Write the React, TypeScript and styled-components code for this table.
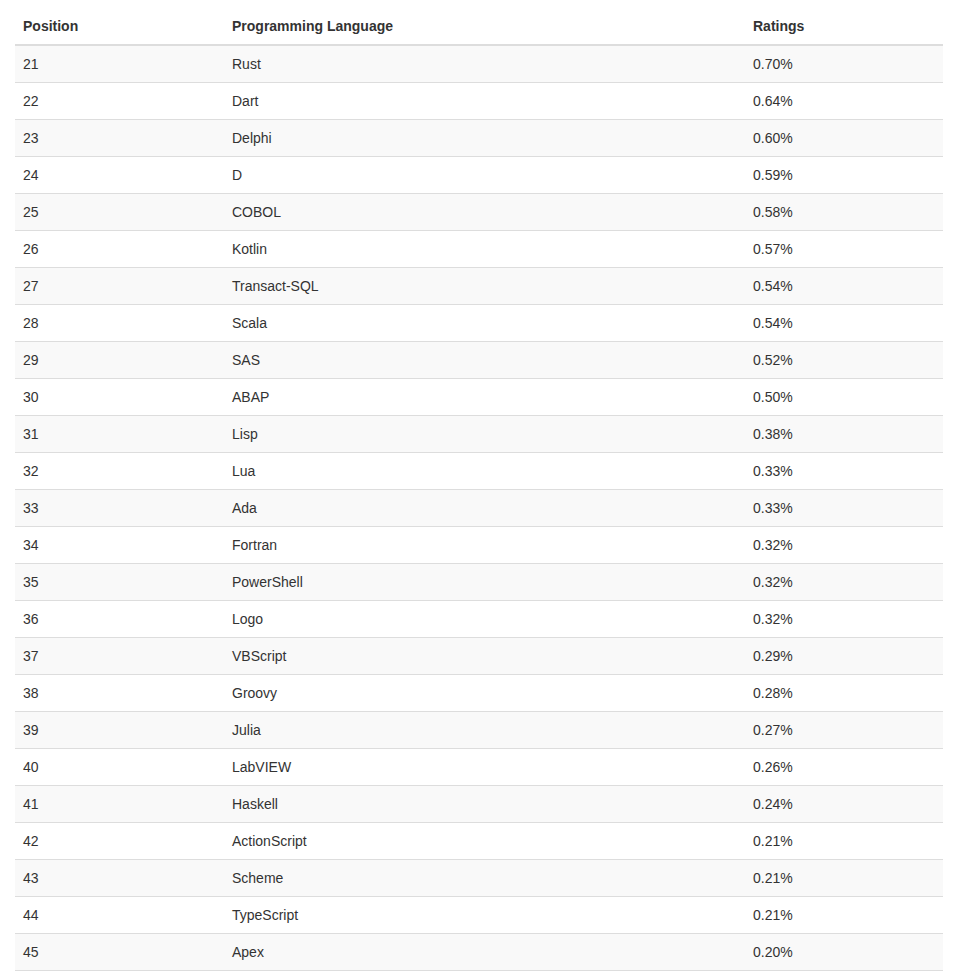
import React from "react";
import styled, { createGlobalStyle } from "styled-components";

const Global = createGlobalStyle`
  html, body { margin: 0; padding: 0; background: #fff; }
  body {
    font-family: "Liberation Sans", Arial, sans-serif;
    font-size: 14px;
    line-height: 1.42857143;
    color: #333;
  }
`;

const Page = styled.div`
  padding: 8px 13px 0 15px;
`;

const Table = styled.table`
  width: 928px;
  table-layout: fixed;
  border-collapse: collapse;
  border-spacing: 0;
`;

const HeadCell = styled.th<{ $w: number }>`
  box-sizing: border-box;
  width: ${(p) => p.$w}px;
  text-align: left;
  font-weight: bold;
  padding: 8px;
  line-height: 20px;
  vertical-align: bottom;
  border-bottom: 2px solid #ddd;
`;

const Row = styled.tr<{ $odd: boolean }>`
  background: ${(p) => (p.$odd ? "#f9f9f9" : "#fff")};
`;

const Cell = styled.td`
  padding: 8px;
  line-height: 20px;
  vertical-align: top;
  border-bottom: 1px solid #ddd;
`;

const data: [number, string, string][] = [
  [21, "Rust", "0.70%"],
  [22, "Dart", "0.64%"],
  [23, "Delphi", "0.60%"],
  [24, "D", "0.59%"],
  [25, "COBOL", "0.58%"],
  [26, "Kotlin", "0.57%"],
  [27, "Transact-SQL", "0.54%"],
  [28, "Scala", "0.54%"],
  [29, "SAS", "0.52%"],
  [30, "ABAP", "0.50%"],
  [31, "Lisp", "0.38%"],
  [32, "Lua", "0.33%"],
  [33, "Ada", "0.33%"],
  [34, "Fortran", "0.32%"],
  [35, "PowerShell", "0.32%"],
  [36, "Logo", "0.32%"],
  [37, "VBScript", "0.29%"],
  [38, "Groovy", "0.28%"],
  [39, "Julia", "0.27%"],
  [40, "LabVIEW", "0.26%"],
  [41, "Haskell", "0.24%"],
  [42, "ActionScript", "0.21%"],
  [43, "Scheme", "0.21%"],
  [44, "TypeScript", "0.21%"],
  [45, "Apex", "0.20%"],
];

export default function App() {
  return (
    <>
      <Global />
      <Page>
        <Table>
          <thead>
            <tr>
              <HeadCell $w={209}>Position</HeadCell>
              <HeadCell $w={521}>Programming Language</HeadCell>
              <HeadCell $w={198}>Ratings</HeadCell>
            </tr>
          </thead>
          <tbody>
            {data.map(([pos, lang, rating], i) => (
              <Row key={pos} $odd={i % 2 === 0}>
                <Cell>{pos}</Cell>
                <Cell>{lang}</Cell>
                <Cell>{rating}</Cell>
              </Row>
            ))}
          </tbody>
        </Table>
      </Page>
    </>
  );
}
